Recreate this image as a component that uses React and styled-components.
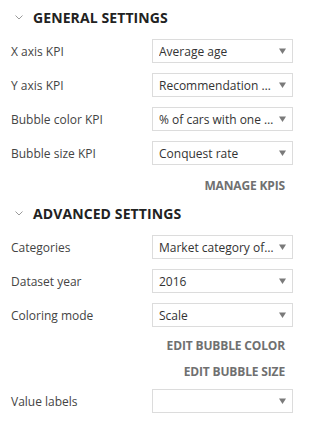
import React from "react";
import styled, { createGlobalStyle } from "styled-components";

const Global = createGlobalStyle`
  html, body { margin: 0; padding: 0; background: #fff; }
  body { font-family: "Open Sans", "Liberation Sans", sans-serif; }
`;

const Panel = styled.div`
  width: 309px;
  padding: 5px 17px 0 11px;
  box-sizing: border-box;
  display: flex;
  flex-direction: column;
`;

const SectionHeader = styled.div`
  height: 24px;
  display: flex;
  align-items: center;
  margin-top: ${(p) => p.$mt || 0}px;
  margin-bottom: 10px;
`;

const Chevron = styled.svg`
  width: 8px;
  height: 5px;
  margin-left: 4px;
  margin-right: 10px;
  flex: none;
`;

const HeaderTitle = styled.span`
  font-size: 14px;
  font-weight: 700;
  color: #222;
  letter-spacing: 0.1px;
`;

const Row = styled.div`
  display: flex;
  align-items: center;
  height: 24px;
  margin-bottom: 10px;
  margin-top: ${(p) => p.$mt || 0}px;
`;

const Label = styled.div`
  width: 141px;
  flex: none;
  font-size: 12px;
  color: #444;
`;

const SelectBox = styled.div`
  flex: none;
  width: 141px;
  height: 24px;
  box-sizing: border-box;
  border: 1px solid #dcdcdc;
  background: #fff;
  display: flex;
  align-items: center;
  padding: 0 6px 0 6px;
  font-size: 12px;
  color: #333;
`;

const SelectText = styled.span`
  flex: 1;
  white-space: nowrap;
  overflow: hidden;
`;

const Arrow = styled.svg`
  width: 7px;
  height: 6px;
  flex: none;
  margin-left: 4px;
`;

const LinkRow = styled.div`
  height: 26px;
  display: flex;
  align-items: center;
  justify-content: flex-end;
  padding-right: 7px;
  margin-top: ${(p) => p.$mt || 0}px;
`;

const LinkText = styled.span`
  font-size: 12px;
  font-weight: 700;
  color: #707070;
  letter-spacing: -0.15px;
`;

const Header = ({ title, mt }) => (
  <SectionHeader $mt={mt}>
    <Chevron viewBox="0 0 8 5">
      <path d="M0.5 0.5 L4 4 L7.5 0.5" fill="none" stroke="#9a9a9a" strokeWidth="1" />
    </Chevron>
    <HeaderTitle>{title}</HeaderTitle>
  </SectionHeader>
);

const Field = ({ label, value, mt }) => (
  <Row $mt={mt}>
    <Label>{label}</Label>
    <SelectBox>
      <SelectText>{value}</SelectText>
      <Arrow viewBox="0 0 7 6">
        <path d="M0 0.5 H7 L3.5 6 Z" fill="#7a7a7a" />
      </Arrow>
    </SelectBox>
  </Row>
);

export default function App() {
  return (
    <>
      <Global />
      <Panel>
        <Header title="GENERAL SETTINGS" />
        <Field label="X axis KPI" value="Average age" />
        <Field label="Y axis KPI" value="Recommendation …" />
        <Field label="Bubble color KPI" value="% of cars with one …" />
        <Field label="Bubble size KPI" value="Conquest rate" />
        <LinkRow $mt={-3}>
          <LinkText>MANAGE KPIS</LinkText>
        </LinkRow>
        <Header title="ADVANCED SETTINGS" mt={3} />
        <Field label="Categories" value="Market category of…" />
        <Field label="Dataset year" value="2016" />
        <Field label="Coloring mode" value="Scale" />
        <LinkRow $mt={-5}>
          <LinkText>EDIT BUBBLE COLOR</LinkText>
        </LinkRow>
        <LinkRow>
          <LinkText>EDIT BUBBLE SIZE</LinkText>
        </LinkRow>
        <Field label="Value labels" value="" mt={5} />
      </Panel>
    </>
  );
}
